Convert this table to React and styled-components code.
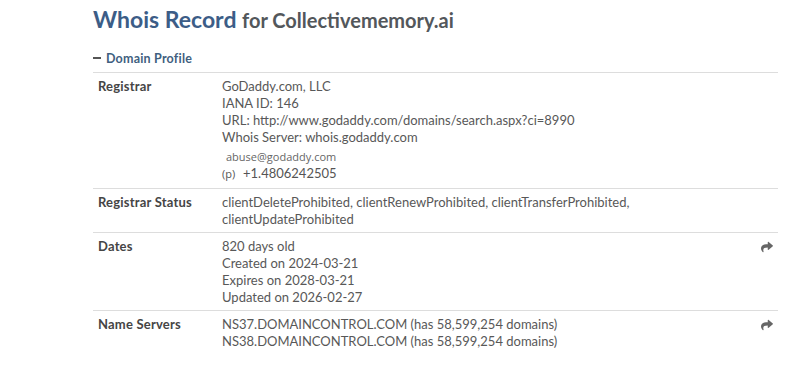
import React from "react";
import styled, { createGlobalStyle } from "styled-components";
import { FaShare } from "react-icons/fa";

const GlobalStyle = createGlobalStyle`
	body {
		margin: 0;
		background: #fff;
		font-family: Lato, "Open Sans", sans-serif;
	}
`;

const rows = [
	{
		label: "Registrar",
		lines: [
			"GoDaddy.com, LLC",
			"IANA ID: 146",
			"URL: http://www.godaddy.com/domains/search.aspx?ci=8990",
			"Whois Server: whois.godaddy.com",
		],
		contact: true,
	},
	{
		label: "Registrar Status",
		lines: [
			"clientDeleteProhibited, clientRenewProhibited, clientTransferProhibited,",
			"clientUpdateProhibited",
		],
	},
	{
		label: "Dates",
		lines: ["820 days old", "Created on 2024-03-21", "Expires on 2028-03-21", "Updated on 2026-02-27"],
		share: true,
	},
	{
		label: "Name Servers",
		lines: [
			"NS37.DOMAINCONTROL.COM (has 58,599,254 domains)",
			"NS38.DOMAINCONTROL.COM (has 58,599,254 domains)",
		],
		share: true,
	},
];

const App = () => {
	return (
		<Page>
			<GlobalStyle />
			<Title>
				Whois Record <small>for Collectivememory.ai</small>
			</Title>
			<SectionToggle>
				<span className="minus" />
				Domain Profile
			</SectionToggle>
			<Table>
				{rows.map((row) => (
					<Row key={row.label} $tall={row.contact}>
						<Label>{row.label}</Label>
						<Value>
							{row.lines.map((line) => (
								<div key={line}>{line}</div>
							))}
							{row.contact && (
								<Contact>
									<div className="email">abuse@godaddy.com</div>
									<div className="phone">
										<span className="tag">(p)</span>+1.4806242505
									</div>
								</Contact>
							)}
						</Value>
						<Action>{row.share && <FaShare />}</Action>
					</Row>
				))}
			</Table>
		</Page>
	);
};

const Page = styled.div`
	width: 685px;
	padding: 5px 0 0 93px;
`;

const Title = styled.h1`
	margin: 0;
	font-size: 23px;
	font-weight: 700;
	line-height: 28px;
	color: #3c5d87;

	small {
		font-size: 20px;
		color: #53575b;
	}
`;

const SectionToggle = styled.div`
	display: flex;
	align-items: center;
	margin-top: 15px;
	height: 18px;
	font-size: 12.5px;
	font-weight: 700;
	color: #3f5f80;
	letter-spacing: 0.2px;

	.minus {
		display: inline-block;
		width: 8px;
		height: 2px;
		margin-right: 5px;
		background: #555;
	}
`;

const Table = styled.div`
	margin-top: 5px;
	border-top: 1px solid #ddd;
`;

const Row = styled.div`
	display: grid;
	grid-template-columns: 124px 1fr 20px;
	padding: ${({ $tall }) => ($tall ? "5px 0 6px 5px" : "5px 0 4px 5px")};
	border-bottom: 1px solid #ddd;
	font-size: 13px;
	line-height: 17px;

	&:last-child {
		border-bottom: none;
	}
`;

const Label = styled.div`
	font-weight: 700;
	color: #454545;
	letter-spacing: 0.2px;
`;

const Value = styled.div`
	color: #585858;
`;

const Contact = styled.div`
	margin-top: 3px;
	line-height: 16px;
	color: #555;

	.email {
		padding-left: 4px;
		font-family: "Open Sans", sans-serif;
		font-size: 11px;
		color: #666;
	}

	.tag {
		display: inline-block;
		width: 21px;
		font-family: "Open Sans", sans-serif;
		font-size: 11px;
	}
`;

const Action = styled.div`
	display: flex;
	justify-content: flex-end;
	padding: 3px 5px 0 0;
	color: #666;

	svg {
		font-size: 12px;
	}
`;

export default App;
